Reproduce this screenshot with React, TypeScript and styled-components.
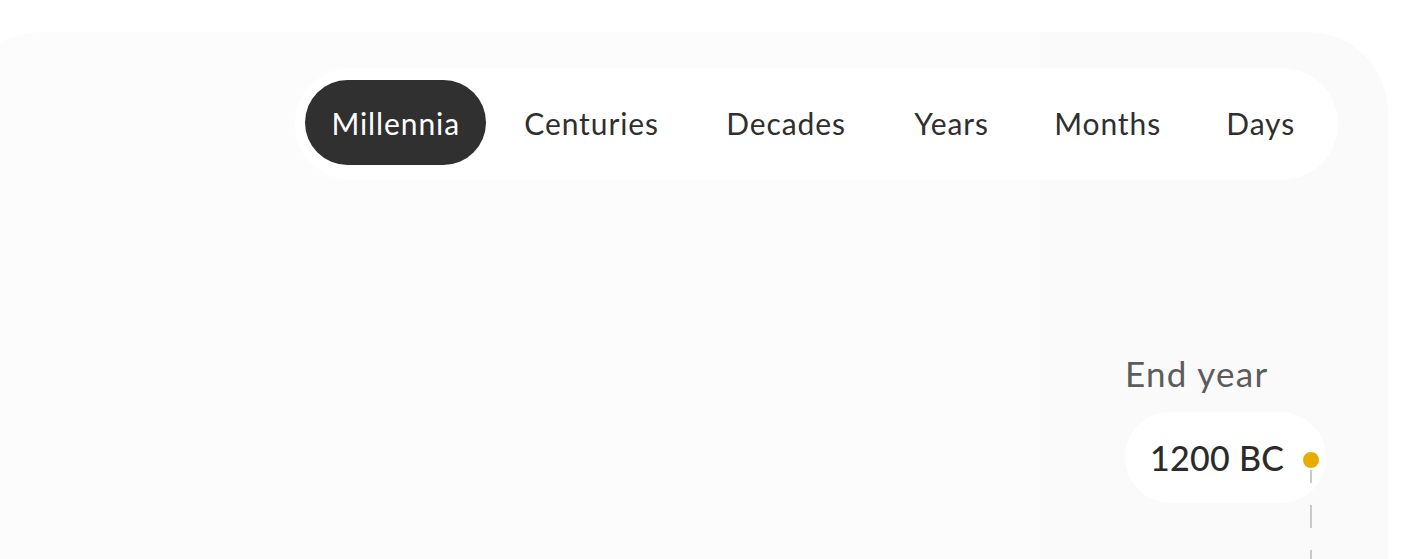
import React from "react";
import styled, { createGlobalStyle } from "styled-components";

const Global = createGlobalStyle`
  html, body {
    margin: 0;
    padding: 0;
    background: #ffffff;
    overflow: hidden;
  }
  body {
    font-family: Lato, "Noto Sans", sans-serif;
  }
`;

const Page = styled.div`
  width: 1420px;
  height: 559px;
  padding-top: 32px;
  box-sizing: border-box;
  overflow: hidden;
`;

const Panel = styled.section`
  margin-left: -40px;
  width: 1428px;
  height: 527px;
  border-radius: 80px 80px 0 0;
  background: linear-gradient(to right, #fcfcfc 1080px, #fafafa 1080px);
  padding-top: 36px;
  box-sizing: border-box;
  display: flex;
  flex-direction: column;
`;

const TabBar = styled.nav`
  margin-left: 335px;
  width: 1043px;
  height: 112px;
  box-sizing: border-box;
  background: #ffffff;
  border-radius: 56px;
  display: flex;
  align-items: center;
  gap: 10px;
  padding: 0 14px 0 10px;
`;

const Tab = styled.button<{ $active?: boolean; $w: number }>`
  width: ${(p) => p.$w}px;
  height: 85px;
  margin-top: -3px;
  border: none;
  border-radius: 43px;
  padding: 0;
  display: flex;
  align-items: center;
  justify-content: center;
  font-family: Lato, "Noto Sans", sans-serif;
  font-size: 30px;
  font-weight: 400;
  letter-spacing: 0.9px;
  background: ${(p) => (p.$active ? "#303030" : "transparent")};
  color: ${(p) => (p.$active ? "#ffffff" : "#2f2f2f")};
  cursor: pointer;
`;

const Body = styled.div`
  flex: 1;
  display: flex;
`;

const Main = styled.div`
  width: 1080px;
`;

const Side = styled.aside`
  flex: 1;
  padding: 173px 0 0 85px;
  display: flex;
  flex-direction: column;
  align-items: flex-start;
`;

const Label = styled.div`
  font-size: 35px;
  line-height: 40px;
  letter-spacing: 1.3px;
  color: #5c5c5c;
`;

const Pill = styled.div`
  margin-top: 19px;
  height: 91px;
  border-radius: 46px;
  background: #ffffff;
  display: flex;
  align-items: center;
  padding: 0 7px 0 25px;
`;

const Value = styled.span`
  font-size: 34px;
  font-weight: 500;
  letter-spacing: 0.3px;
  color: #2b2b2b;
  line-height: 40px;
`;

const Dot = styled.span`
  position: relative;
  width: 16px;
  height: 16px;
  border-radius: 50%;
  background: #e6ad00;
  margin: 5px 0 0 19px;
  &::after {
    content: "";
    position: absolute;
    left: 7px;
    top: 18px;
    width: 2px;
    height: 200px;
    background: repeating-linear-gradient(
      to bottom,
      #c9c9c9 0 23px,
      transparent 23px 45px
    );
    background-position: 0 -10px;
  }
`;

const tabs = [
  { label: "Millennia", w: 182 },
  { label: "Centuries", w: 191 },
  { label: "Decades", w: 179 },
  { label: "Years", w: 133 },
  { label: "Months", w: 160 },
  { label: "Days", w: 127 },
];

export default function App() {
  return (
    <Page>
      <Global />
      <Panel>
        <TabBar>
          {tabs.map((t, i) => (
            <Tab key={t.label} $w={t.w} $active={i === 0}>
              {t.label}
            </Tab>
          ))}
        </TabBar>
        <Body>
          <Main />
          <Side>
            <Label>End year</Label>
            <Pill>
              <Value>1200 BC</Value>
              <Dot />
            </Pill>
          </Side>
        </Body>
      </Panel>
    </Page>
  );
}
